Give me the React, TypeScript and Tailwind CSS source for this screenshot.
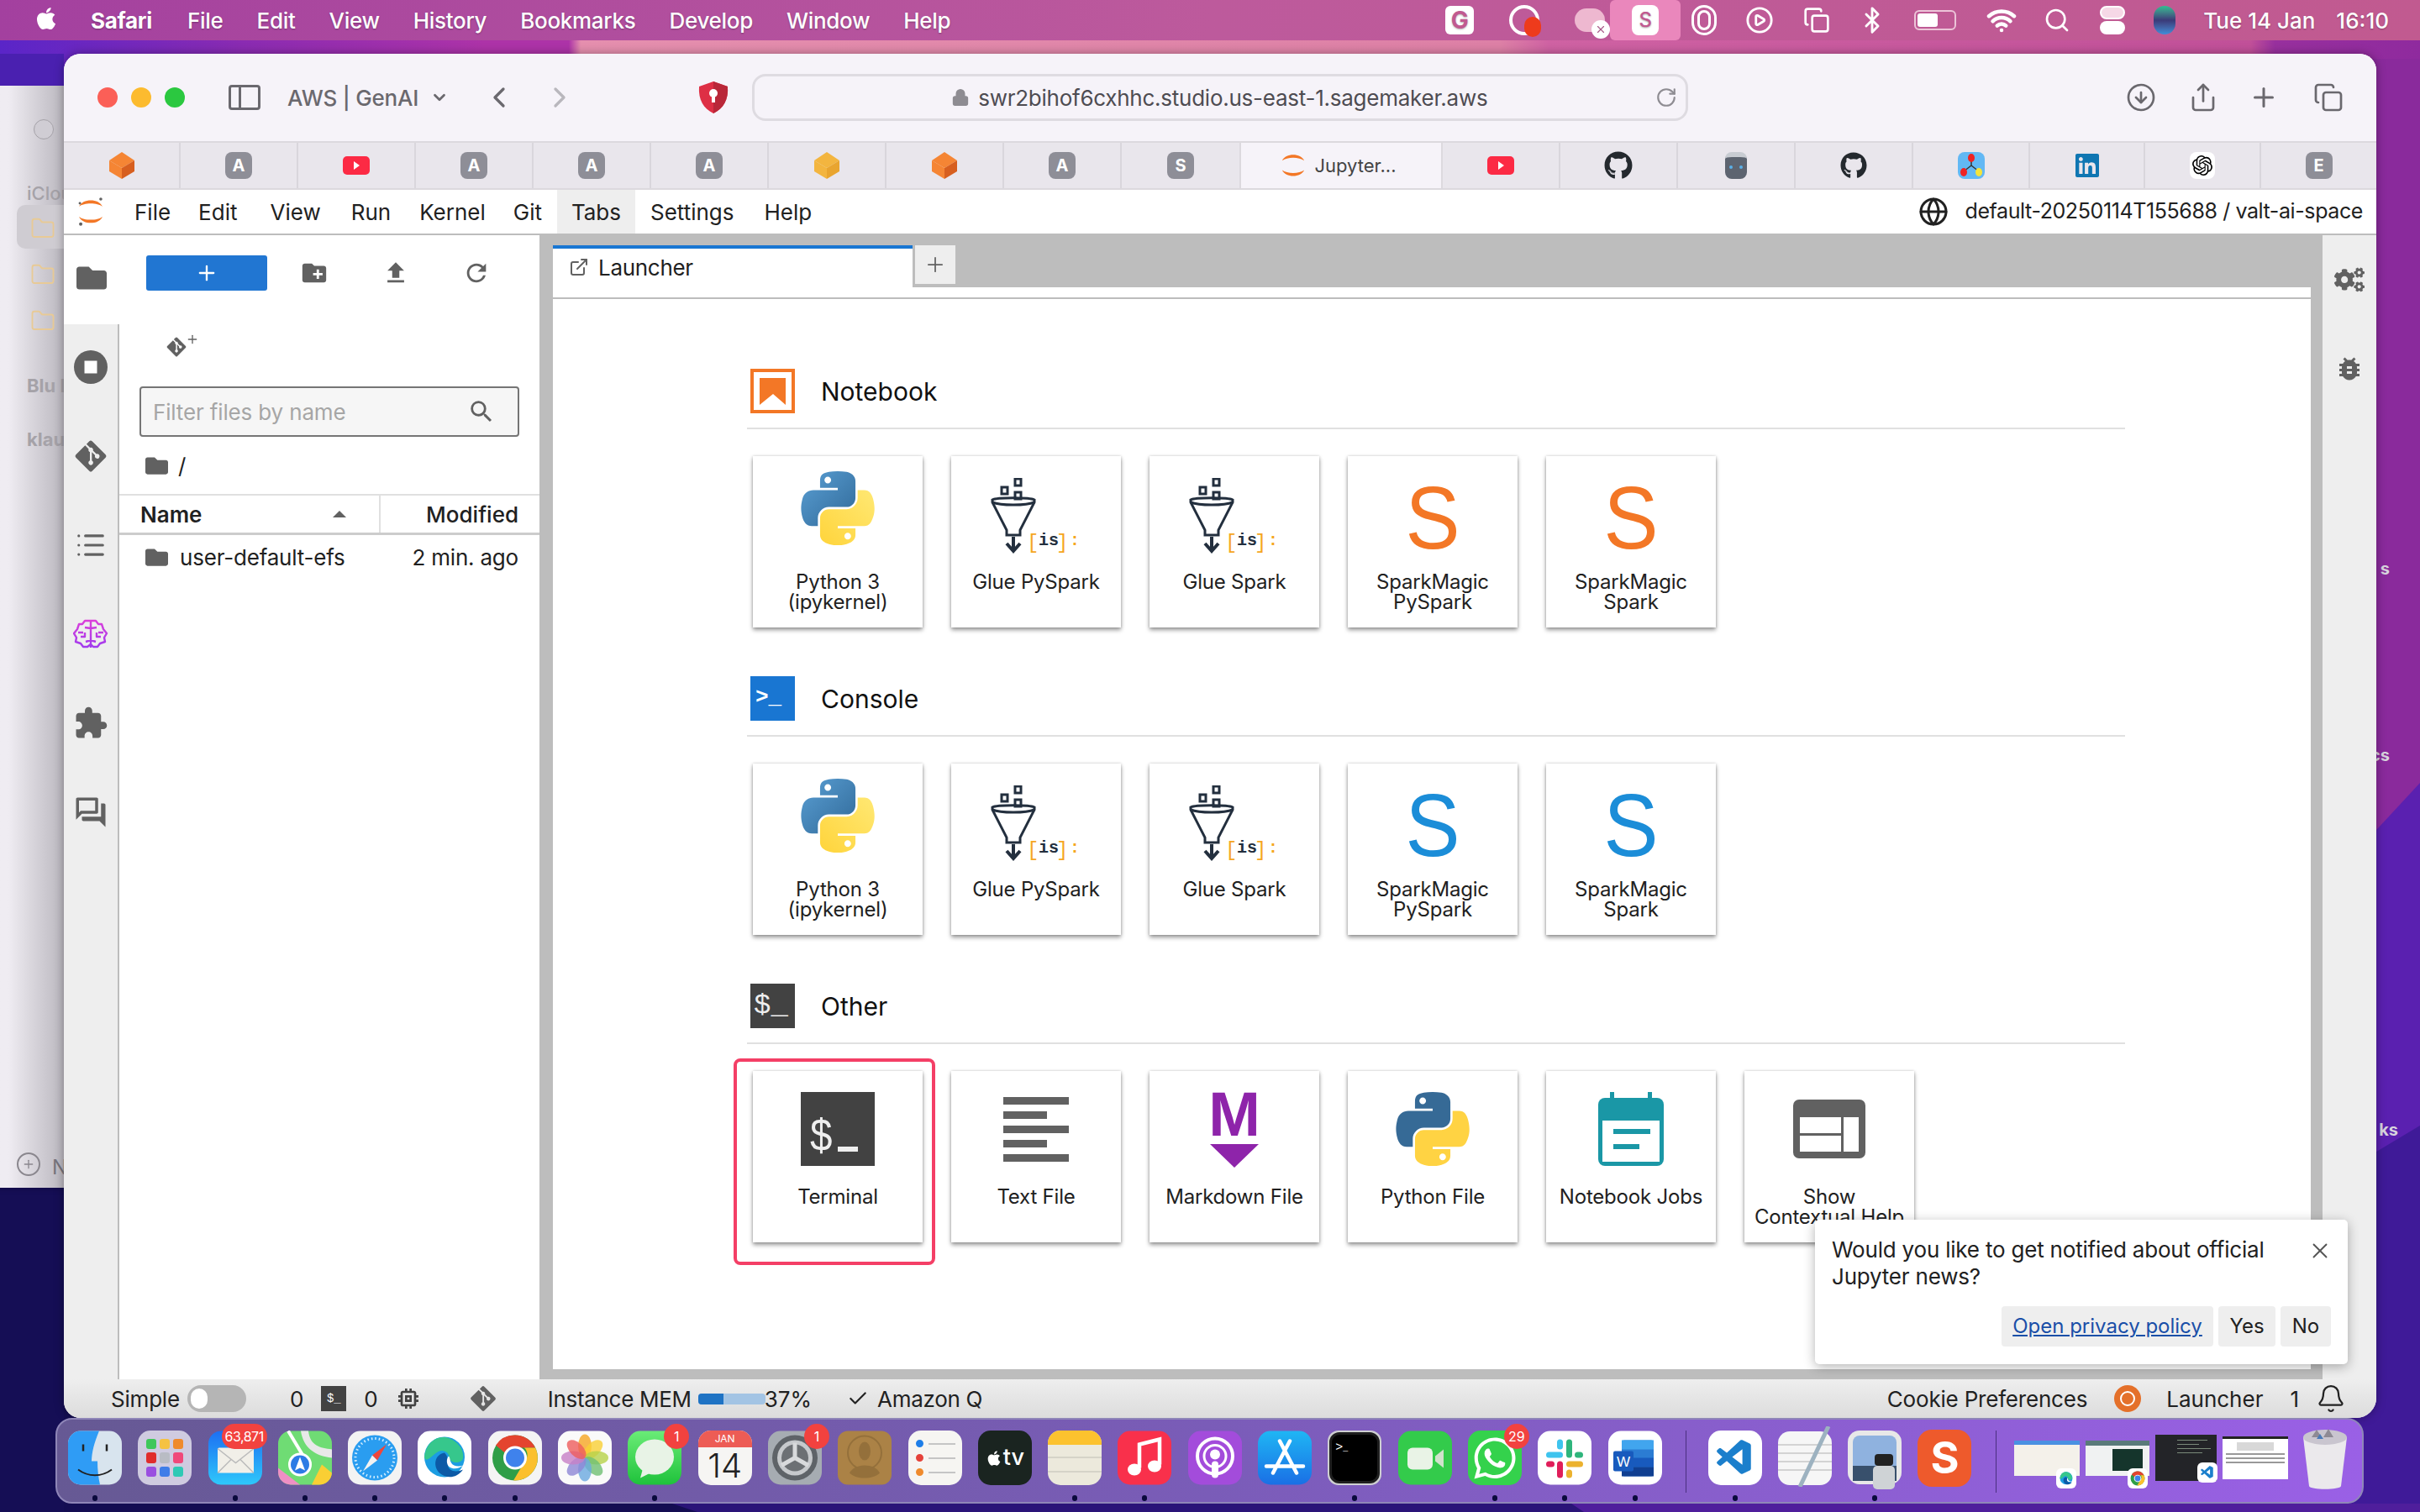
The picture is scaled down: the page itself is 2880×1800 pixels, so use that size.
import React from 'react';
import {
  ChevronLeft, ChevronRight, ChevronDown, CircleArrowDown, Share, Plus, Copy, RotateCw, Lock, Globe, Search, Wifi,
  Bluetooth, CirclePlay, Check, Bell, X, List, ExternalLink, Folder,
} from 'lucide-react';
import { FaApple, FaGithub, FaGitAlt, FaLinkedin, FaWhatsapp, FaCogs, FaFolder } from 'react-icons/fa';
import { MdCreateNewFolder, MdFileUpload, MdRefresh, MdSearch, MdExtension, MdOutlineForum, MdBugReport, MdMemory, MdStop } from 'react-icons/md';
import { SiOpenai } from 'react-icons/si';
import { VscVscode } from 'react-icons/vsc';

const SNAKE_TOP =
  'M54.918 0C50.335.02 45.957.41 42.106 1.093 30.76 3.098 28.7 7.295 28.7 15.032V25.25h26.812v3.406H18.638c-7.792 0-14.616 4.684-16.75 13.594-2.462 10.213-2.571 16.586 0 27.25 1.906 7.938 6.458 13.594 14.25 13.594h9.22V70.844c0-8.85 7.657-16.656 16.75-16.656h26.78c7.455 0 13.406-6.138 13.406-13.625V15.032c0-7.266-6.13-12.725-13.406-13.938C64.282.328 59.502-.02 54.918 0zM40.418 8.22c2.77 0 5.031 2.298 5.031 5.125 0 2.816-2.261 5.094-5.031 5.094-2.78 0-5.031-2.278-5.031-5.094 0-2.827 2.251-5.125 5.031-5.125z';
const SNAKE_BOTTOM =
  'M85.638 28.656v11.906c0 9.231-7.826 17-16.75 17H42.106c-7.336 0-13.406 6.278-13.406 13.625v25.531c0 7.266 6.319 11.54 13.406 13.625 8.487 2.496 16.626 2.947 26.78 0 6.75-1.954 13.406-5.888 13.406-13.625V86.5H55.512v-3.406h40.188c7.792 0 10.696-5.435 13.406-13.594 2.799-8.399 2.68-16.476 0-27.25-1.926-7.757-5.604-13.594-13.406-13.594zM70.575 93.313c2.78 0 5.031 2.278 5.031 5.094 0 2.827-2.251 5.125-5.031 5.125-2.77 0-5.031-2.298-5.031-5.125 0-2.816 2.261-5.094 5.031-5.094z';

const PythonLogo = ({ flat = false }: { flat?: boolean }) => (
  <svg viewBox="0 0 111 112" className={flat ? 'w-[88px] h-[88px]' : 'w-[88px] h-[88px] -mt-[15px]'}>
    <defs>
      <linearGradient id="pyBlue" x1="0" y1="0" x2="1" y2="1">
        <stop offset="0" stopColor="#5a9fd4" />
        <stop offset="1" stopColor="#306998" />
      </linearGradient>
      <linearGradient id="pyYellow" x1="0" y1="1" x2="1" y2="0">
        <stop offset="0" stopColor="#ffd43b" />
        <stop offset="1" stopColor="#ffe873" />
      </linearGradient>
    </defs>
    <path d={SNAKE_TOP} fill={flat ? '#366a96' : 'url(#pyBlue)'} fillRule="evenodd" />
    <path d={SNAKE_BOTTOM} fill={flat ? '#ffd343' : 'url(#pyYellow)'} fillRule="evenodd" />
  </svg>
);

const GlueIcon = () => (
  <svg viewBox="0 0 108 90" className="w-[108px] h-[90px] mt-[4px]" fill="none" stroke="#232f3e" strokeWidth="3">
    <rect x="29" y="1" width="7" height="8" />
    <rect x="13" y="11" width="7" height="8" />
    <rect x="29" y="17" width="7" height="8" />
    <path d="M2 26c6-3 44-3 50 0v3L35 62v6H19v-6L2 29z" />
    <path d="M2 29c10 4 40 4 50 0" />
    <path d="M27 70v15M19 78l8 9 8-9" strokeWidth="4" />
    <text x="43" y="84" fontSize="24" stroke="none" fill="#f5a623" fontFamily="'Liberation Mono', monospace">[</text>
    <text x="57" y="80" fontSize="20" stroke="none" fill="#232f3e" fontWeight="700" fontFamily="'Liberation Mono', monospace">is</text>
    <text x="78" y="84" fontSize="24" stroke="none" fill="#f5a623" fontFamily="'Liberation Mono', monospace">]</text>
    <text x="94" y="80" fontSize="20" stroke="none" fill="#f5a623" fontWeight="700" fontFamily="'Liberation Mono', monospace">:</text>
  </svg>
);

const SparkS = ({ color }: { color: string }) => (
  <svg viewBox="0 0 80 130" className="w-[80px] h-[130px] mt-[6px]">
    <g transform="translate(40 103) scale(0.92 1)">
      <text textAnchor="middle" fontSize="106" fill={color} fontFamily="'Liberation Sans', sans-serif">S</text>
    </g>
  </svg>
);

const TerminalIcon = () => (
  <svg viewBox="0 0 88 88" className="w-[88px] h-[88px]">
    <rect width="88" height="88" fill="#424242" />
    <g transform="translate(10 70) scale(0.85 1)">
      <text fontSize="56" fill="#eee" fontFamily="'Liberation Mono', monospace">$</text>
    </g>
    <rect x="44" y="65" width="24" height="6" fill="#eee" />
  </svg>
);

const TextFileIcon = () => (
  <div className="w-[78px] flex flex-col gap-[8px]">
    {[78, 52, 78, 52, 78].map((w, i) => (
      <div key={i} className={w === 78 ? 'h-[9px] w-[78px] bg-[#616161]' : 'h-[9px] w-[52px] bg-[#616161]'} />
    ))}
  </div>
);

const MarkdownIcon = () => (
  <svg viewBox="-10 -20 84 134" className="w-[84px] h-[134px]">
    <text x="32" y="55" textAnchor="middle" fontSize="74" fontWeight="700" fill="#8e24aa" fontFamily="'Liberation Sans', sans-serif">M</text>
    <polygon points="3,65 61,65 32,93" fill="#8e24aa" />
  </svg>
);

const JobsIcon = () => (
  <svg viewBox="0 0 78 88" className="w-[78px] h-[88px]">
    <rect x="14" y="0" width="5" height="10" fill="#1a97a6" />
    <rect x="59" y="0" width="5" height="10" fill="#1a97a6" />
    <rect x="0" y="7" width="78" height="81" rx="8" fill="#1a97a6" />
    <rect x="5" y="34" width="68" height="49" fill="#fff" />
    <rect x="18" y="44" width="44" height="6" fill="#1a97a6" />
    <rect x="18" y="62" width="31" height="6" fill="#1a97a6" />
  </svg>
);

const HelpIcon = () => (
  <svg viewBox="0 0 86 70" className="w-[86px] h-[70px]">
    <rect width="86" height="70" rx="7" fill="#616161" />
    <rect x="8" y="21" width="49" height="19" fill="#fff" />
    <rect x="8" y="43" width="49" height="19" fill="#fff" />
    <rect x="60" y="21" width="18" height="41" fill="#fff" />
  </svg>
);

const NotebookBadge = () => (
  <svg viewBox="0 0 53 53" className="w-[53px] h-[53px]">
    <rect width="53" height="53" fill="#f37726" />
    <rect x="4" y="4" width="45" height="45" fill="#fff" />
    <polygon points="11,11 42,11 42,43 27,30 11,43" fill="#f37726" />
  </svg>
);

const BrainIcon = () => (
  <svg viewBox="0 0 42 38" className="w-[42px] h-[38px]" fill="none" strokeWidth="2.4" strokeLinejoin="round">
    <defs>
      <linearGradient id="brainGrad" gradientUnits="userSpaceOnUse" x1="21" y1="0" x2="21" y2="38">
        <stop offset="0" stopColor="#e040d8" />
        <stop offset="1" stopColor="#9a3af0" />
      </linearGradient>
    </defs>
    <g stroke="url(#brainGrad)">
      <path d="M21 3h-7l-3 4H7l-2 6-4 5 3 5-1 5 6 2 3 4h5l4-3 3 3h5l3-4 6-2-1-5 3-5-4-5-2-6h-4l-3-4z" />
      <path d="M21 3v32M21 12l-7-1M21 12l7-1M12 17H6M14 17v5H9M30 17h6M28 17v5h5M21 26l-6 2M21 26l6 2" />
    </g>
  </svg>
);

const Card = ({ icon, lines, highlight = false }: { icon: React.ReactNode; lines: string[]; highlight?: boolean }) => (
  <div className="relative w-[202px] h-[204px] bg-white flex flex-col items-center shadow-[0_3px_5px_rgba(0,0,0,0.4),0_0_3px_rgba(0,0,0,0.18)] shrink-0">
    <div className="h-[138px] flex items-center justify-center shrink-0">{icon}</div>
    <div className="flex flex-col items-center text-[24px] leading-[24px] tracking-[-0.2px] text-[#212121] whitespace-nowrap">
      {lines.map(l => (
        <span key={l}>{l}</span>
      ))}
    </div>
    {highlight && <div className="absolute -left-[23px] -top-[15px] -right-[15px] -bottom-[27px] border-[4px] border-[#f43f66] rounded-[8px]" />}
  </div>
);

const Section = ({ icon, title, children }: { icon: React.ReactNode; title: string; children: React.ReactNode }) => (
  <div className="h-[366px]">
    <div className="h-[72px] border-b-2 border-[#e0e0e0] flex items-start w-[1640px]">
      <div className="w-[88px] pl-[4px] flex shrink-0">{icon}</div>
      <div className="text-[30px] leading-[54px] text-[#111]">{title}</div>
    </div>
    <div className="flex gap-[34px] pl-[7px] pt-[32px]">{children}</div>
  </div>
);

const BrowserTab = ({ children, w = 'w-[140px]' }: { children: React.ReactNode; w?: string }) => (
  <div className={`${w} h-full shrink-0 flex items-center justify-center border-r-2 border-[#d9d6dc]`}>{children}</div>
);

const Letter = ({ c }: { c: string }) => (
  <div className="w-[32px] h-[32px] rounded-[8px] bg-[#8e8e97] text-white text-[20px] font-bold flex items-center justify-center">{c}</div>
);
const Yt = () => (
  <div className="w-[32px] h-[22px] rounded-[5px] bg-[#fc2a44] flex items-center justify-center">
    <div className="w-0 h-0 border-y-[5px] border-y-transparent border-l-[7px] border-l-white" />
  </div>
);
const Cube = ({ c1, c2 }: { c1: string; c2: string }) => (
  <svg viewBox="0 0 30 32" className="w-[30px] h-[32px]">
    <polygon points="15,0 30,10 15,19 0,10" fill={c1} />
    <polygon points="0,10 15,19 15,32 0,23" fill={c1} />
    <polygon points="30,10 15,19 15,32 30,23" fill={c2} />
  </svg>
);
const JupyterArcs = ({ size = 32, dots = false }: { size?: number; dots?: boolean }) => (
  <svg viewBox="0 0 32 36" style={{ width: size, height: size * 1.12 }}>
    <path d="M2 12C6 2 26 2 30 12 24 7 8 7 2 12z" fill="#f37726" />
    <path d="M2 24C6 34 26 34 30 24 24 29 8 29 2 24z" fill="#f37726" />
    {dots && (
      <>
        <circle cx="28" cy="3" r="1.800" fill="#616161" />
        <circle cx="3" cy="8" r="1.500" fill="#616161" />
        <circle cx="4" cy="33" r="2" fill="#616161" />
      </>
    )}
  </svg>
);

const MENU = ['File', 'Edit', 'View', 'History', 'Bookmarks', 'Develop', 'Window', 'Help'];

const Finder = () => (
  <svg viewBox="0 0 64 64" className="w-full h-full">
    <rect width="64" height="64" rx="15" fill="#d8e4ee" />
    <path d="M15 0h22c-6 14-9 26-9 36h7c0 10 1 19 3 28H15A15 15 0 0 1 0 49V15A15 15 0 0 1 15 0z" fill="#2f9cf5" />
    <path d="M18 16v8M46 16v8" stroke="#222" strokeWidth="2.5" />
    <path d="M12 46c12 9 28 9 40 0" stroke="#222" strokeWidth="2" fill="none" />
  </svg>
);
const Launchpad = () => (
  <div className="w-full h-full rounded-[15px] bg-[#cfcbe0] grid grid-cols-3 gap-[4px] p-[10px]">
    {['#3fc75a', '#f5c242', '#ef8a2d', '#e02c2c', '#b9bcc4', '#f0487a', '#9a4fe0', '#3f7de8', '#2fc9b5'].map(c => (
      <div key={c} className="rounded-[3px]" style={{ background: c }} />
    ))}
  </div>
);
const MailIcon = () => (
  <svg viewBox="0 0 64 64" className="w-full h-full">
    <defs>
      <linearGradient id="mailBg" x1="0" y1="0" x2="0" y2="1">
        <stop offset="0" stopColor="#1d6ff2" />
        <stop offset="1" stopColor="#2ec8fb" />
      </linearGradient>
    </defs>
    <rect width="64" height="64" rx="15" fill="url(#mailBg)" />
    <rect x="11" y="20" width="43" height="30" rx="2" fill="#f1efe8" />
    <path d="M11 21l21.500 17L54 21M11 50l16-16M54 50L38 34" stroke="#bbb" strokeWidth="1.500" fill="none" />
  </svg>
);
const MapsIcon = () => (
  <svg viewBox="0 0 64 64" className="w-full h-full">
    <rect width="64" height="64" rx="15" fill="#6fdc74" />
    <path d="M0 44l26 20H15A15 15 0 0 1 0 49z" fill="#ef8fc4" />
    <path d="M40 64l12-24 12 10v0a15 15 0 0 1-15 14z" fill="#f9cf34" />
    <path d="M36 0c2 18 14 20 28 22v10C44 30 30 20 27 0z" fill="#e8e8e8" />
    <path d="M12 0L36 40" stroke="#fff" strokeWidth="4" />
    <circle cx="26" cy="40" r="14" fill="#fff" />
    <circle cx="26" cy="40" r="11" fill="#2c7be5" />
    <path d="M26 31l6 16-6-3-6 3z" fill="#fff" />
  </svg>
);
const SafariIcon = () => (
  <svg viewBox="0 0 64 64" className="w-full h-full">
    <rect width="64" height="64" rx="15" fill="#f3f3f3" />
    <circle cx="32" cy="32" r="27" fill="#2a9df0" />
    <circle cx="32" cy="32" r="23" fill="none" stroke="#d8f0ff" strokeWidth="3" strokeDasharray="1.500 3" />
    <polygon points="46,16 35,35 29,29" fill="#f0453a" />
    <polygon points="18,48 35,35 29,29" fill="#f2f2f2" />
  </svg>
);
const EdgeGlyph = () => (
  <>
    <circle cx="32" cy="31" r="24" fill="#1b9de2" />
    <path d="M8 31C10 12 26 4 38 9c10 4 18 14 16 24-2 6-14 6-16 0 0-8-8-12-14-8-8 5-14 14-16 6z" fill="#36c78c" />
    <path d="M32 26c-12 2-14 16-6 24 8 7 20 7 28-4-8 4-18 2-18-6 0-6 0-10-4-14z" fill="#0c5aa6" />
    <path d="M37 30c-3 3-3 10 1 13 4 3 12 2 16-2-5 2-12 1-14-3-2-3-1-6-3-8z" fill="#fff" />
  </>
);
const EdgeIcon = () => (
  <svg viewBox="0 0 64 64" className="w-full h-full">
    <rect width="64" height="64" rx="15" fill="#fff" />
    <EdgeGlyph />
  </svg>
);
const ChromeGlyph = () => (
  <>
    <circle cx="32" cy="32" r="27" fill="#2f9e48" />
    <path d="M32 5a27 27 0 0 1 24 15H32a12 12 0 0 0-11 7L9 17A27 27 0 0 1 32 5z" fill="#e4442f" />
    <path d="M56 20a27 27 0 0 1-26 39l13-22a12 12 0 0 0 0-17z" fill="#fbc02d" />
    <circle cx="32" cy="32" r="14" fill="#fff" />
    <circle cx="32" cy="32" r="11" fill="#3f82ec" />
  </>
);
const ChromeIcon = () => (
  <svg viewBox="0 0 64 64" className="w-full h-full">
    <rect width="64" height="64" rx="15" fill="#f4f4f4" />
    <ChromeGlyph />
  </svg>
);
const PhotosIcon = () => (
  <svg viewBox="0 0 64 64" className="w-full h-full">
    <rect width="64" height="64" rx="15" fill="#fafafa" />
    {['#f6a623', '#f9cf34', '#b6d24a', '#6fbf73', '#6aa9e0', '#8d87d6', '#c77fc7', '#ee5c5c'].map((c, i) => (
      <ellipse key={c} cx="32" cy="18" rx="8" ry="14" fill={c} opacity="0.8" transform={`rotate(${i * 45} 32 32)`} />
    ))}
  </svg>
);
const MessagesIcon = () => (
  <svg viewBox="0 0 64 64" className="w-full h-full">
    <defs>
      <linearGradient id="msgBg" x1="0" y1="0" x2="0" y2="1">
        <stop offset="0" stopColor="#6aec77" />
        <stop offset="1" stopColor="#1fc23b" />
      </linearGradient>
    </defs>
    <rect width="64" height="64" rx="15" fill="url(#msgBg)" />
    <ellipse cx="32" cy="31" rx="23" ry="21" fill="#e8f3e6" />
    <path d="M18 45l-3 11 14-7z" fill="#e8f3e6" />
  </svg>
);
const CalendarIcon = () => (
  <div className="w-full h-full rounded-[15px] bg-[#f6f5f3] overflow-hidden flex flex-col items-center">
    <div className="w-full h-[20px] bg-[#ed5c55] text-white text-[12px] leading-[20px] text-center">JAN</div>
    <div className="text-[40px] leading-[44px] text-[#222] font-light">14</div>
  </div>
);
const SettingsIcon = () => (
  <svg viewBox="0 0 64 64" className="w-full h-full">
    <rect width="64" height="64" rx="15" fill="#a6acb2" />
    <circle cx="32" cy="32" r="27" fill="#5e6368" />
    <circle cx="32" cy="32" r="21" fill="#c6c9cc" />
    <circle cx="32" cy="32" r="16" fill="#6c7074" />
    <path d="M32 32V14M32 32l16 9M32 32l-16 9" stroke="#d8dadc" strokeWidth="5" />
  </svg>
);
const ContactsIcon = () => (
  <svg viewBox="0 0 64 64" className="w-full h-full">
    <rect width="64" height="64" rx="12" fill="#ab8246" />
    <circle cx="32" cy="26" r="20" fill="none" stroke="#94703b" strokeWidth="2" />
    <ellipse cx="32" cy="24" rx="7" ry="11" fill="#94703b" />
    <path d="M14 50c6-12 30-12 36 0-8 8-28 8-36 0z" fill="#94703b" />
  </svg>
);
const RemindersIcon = () => (
  <div className="w-full h-full rounded-[15px] bg-[#f6f5f2] flex flex-col justify-center gap-[8px] pl-[9px]">
    {['#1e7ee8', '#e5423a', '#ef8a2d'].map(c => (
      <div key={c} className="flex items-center gap-[6px]">
        <div className="w-[9px] h-[9px] rounded-full border-2" style={{ borderColor: c, background: c }} />
        <div className="w-[32px] h-[2px] bg-[#c5c5c5]" />
      </div>
    ))}
  </div>
);
const TvIcon = () => (
  <div className="w-full h-full rounded-[15px] bg-[#1a2420] flex items-center justify-center gap-[1px] text-white text-[27px] font-medium">
    <FaApple size={20} />
    <span>tv</span>
  </div>
);
const NotesIcon = () => (
  <div className="w-full h-full rounded-[15px] bg-[#ece9dc] overflow-hidden flex flex-col">
    <div className="h-[17px] bg-[#fcc22e] shrink-0" />
    <div className="h-[2px] mt-[14px] bg-[#d5d3c8]" />
    <div className="h-[2px] mt-[15px] bg-[#d5d3c8]" />
  </div>
);
const MusicIcon = () => (
  <svg viewBox="0 0 64 64" className="w-full h-full">
    <rect width="64" height="64" rx="15" fill="#f9304b" />
    <path d="M26 44V16l24-6v30" stroke="#fff" strokeWidth="4.500" fill="none" />
    <ellipse cx="20" cy="46" rx="8" ry="7" fill="#fff" />
    <ellipse cx="44" cy="42" rx="8" ry="7" fill="#fff" />
  </svg>
);
const PodcastIcon = () => (
  <svg viewBox="0 0 64 64" className="w-full h-full">
    <rect width="64" height="64" rx="15" fill="#a34cdb" />
    <circle cx="32" cy="30" r="21" fill="none" stroke="#fff" strokeWidth="4" />
    <circle cx="32" cy="30" r="13" fill="none" stroke="#fff" strokeWidth="3" />
    <circle cx="32" cy="28" r="6" fill="#fff" />
    <rect x="28" y="36" width="8" height="20" rx="4" fill="#fff" />
  </svg>
);
const AppStoreIcon = () => (
  <svg viewBox="0 0 64 64" className="w-full h-full">
    <defs>
      <linearGradient id="asBg" x1="0" y1="0" x2="0" y2="1">
        <stop offset="0" stopColor="#1fb6f4" />
        <stop offset="1" stopColor="#1a6fe5" />
      </linearGradient>
    </defs>
    <rect width="64" height="64" rx="15" fill="url(#asBg)" />
    <path d="M26 12l20 38M38 12L18 50M10 42h44" stroke="#fff" strokeWidth="4.500" strokeLinecap="round" />
  </svg>
);
const TerminalApp = () => (
  <div className="w-full h-full rounded-[13px] bg-[#cfd0d2] p-[2px]">
    <div className="w-full h-full rounded-[12px] bg-black border-[3px] border-[#1f1f1f] text-white text-[15px] leading-[20px] pl-[4px] pt-[6px] font-mono">
      {'>'}
      <span className="text-[10px]">_</span>
    </div>
  </div>
);
const FaceTimeIcon = () => (
  <svg viewBox="0 0 64 64" className="w-full h-full">
    <rect width="64" height="64" rx="15" fill="#33cb4b" />
    <rect x="11" y="20" width="30" height="26" rx="6" fill="#e9f3e6" />
    <polygon points="44,30 54,22 54,44 44,36" fill="#d0e2cc" />
  </svg>
);
const WhatsappIcon = () => (
  <div className="w-full h-full rounded-[15px] bg-[#34d24c] flex items-center justify-center text-white">
    <FaWhatsapp size={56} />
  </div>
);
const SlackIcon = () => (
  <svg viewBox="0 0 64 64" className="w-full h-full">
    <rect width="64" height="64" rx="15" fill="#fff" />
    <rect x="10" y="25" width="20" height="7" rx="3.500" fill="#3ec4ee" />
    <rect x="23" y="10" width="7" height="12" rx="3.500" fill="#3ec4ee" />
    <rect x="34" y="10" width="7" height="22" rx="3.500" fill="#2fb57c" />
    <rect x="44" y="25" width="10" height="7" rx="3.500" fill="#2fb57c" />
    <rect x="34" y="36" width="20" height="7" rx="3.500" fill="#ecb22e" />
    <rect x="34" y="46" width="7" height="10" rx="3.500" fill="#ecb22e" />
    <rect x="23" y="36" width="7" height="20" rx="3.500" fill="#e01e5a" />
    <rect x="10" y="36" width="10" height="7" rx="3.500" fill="#e01e5a" />
  </svg>
);
const WordIcon = () => (
  <svg viewBox="0 0 64 64" className="w-full h-full">
    <rect width="64" height="64" rx="15" fill="#fff" />
    <rect x="16" y="11" width="38" height="43" rx="3" fill="#2b7cd3" />
    <rect x="16" y="11" width="38" height="11" fill="#41a5ee" />
    <rect x="16" y="32" width="38" height="11" fill="#185abd" />
    <rect x="16" y="43" width="38" height="11" fill="#103f91" />
    <rect x="6" y="24" width="24" height="24" rx="2" fill="#185abd" />
    <text x="18" y="42" textAnchor="middle" fontSize="17" fill="#fff" fontFamily="'Liberation Sans', sans-serif">W</text>
  </svg>
);
const CodeIcon = () => (
  <div className="w-full h-full rounded-[15px] bg-white flex items-center justify-center text-[#1b7fcc]">
    <VscVscode size={50} />
  </div>
);
const TextEditIcon = () => (
  <svg viewBox="0 0 64 72" className="w-full h-[72px] -mt-[5px]">
    <rect y="6" width="64" height="64" rx="14" fill="#f6f6f6" />
    <path d="M0 22h64M0 32h64M0 42h64M0 52h64" stroke="#c8c8c8" strokeWidth="1.500" />
    <path d="M60 0L26 72" stroke="#9db2c0" strokeWidth="5" />
  </svg>
);
const PreviewIcon = () => (
  <svg viewBox="0 0 64 72" className="w-full h-[72px]">
    <rect width="64" height="64" rx="14" fill="#e8e8e8" />
    <rect x="6" y="6" width="52" height="54" rx="8" fill="#8fb2df" />
    <rect x="6" y="42" width="52" height="18" fill="#38506c" />
    <rect x="32" y="28" width="22" height="14" rx="4" fill="#222" />
    <rect x="30" y="42" width="26" height="28" rx="5" fill="#cfd3d6" />
  </svg>
);
const SublimeIcon = () => (
  <div className="w-full h-[68px] -mt-[1px] rounded-[17px] bg-[#ee5a2c] flex items-center justify-center text-white text-[52px] font-bold">S</div>
);

type DockApp = { key: string; node: React.ReactNode; dot?: boolean; badge?: string };
const APPS: DockApp[] = [
  { key: 'finder', node: <Finder />, dot: true },
  { key: 'launchpad', node: <Launchpad /> },
  { key: 'mail', node: <MailIcon />, dot: true, badge: '63,871' },
  { key: 'maps', node: <MapsIcon />, dot: true },
  { key: 'safari', node: <SafariIcon />, dot: true },
  { key: 'edge', node: <EdgeIcon />, dot: true },
  { key: 'chrome', node: <ChromeIcon />, dot: true },
  { key: 'photos', node: <PhotosIcon /> },
  { key: 'messages', node: <MessagesIcon />, dot: true, badge: '1' },
  { key: 'calendar', node: <CalendarIcon /> },
  { key: 'settings', node: <SettingsIcon />, badge: '1' },
  { key: 'contacts', node: <ContactsIcon /> },
  { key: 'reminders', node: <RemindersIcon /> },
  { key: 'tv', node: <TvIcon /> },
  { key: 'notes', node: <NotesIcon />, dot: true },
  { key: 'music', node: <MusicIcon />, dot: true },
  { key: 'podcasts', node: <PodcastIcon /> },
  { key: 'appstore', node: <AppStoreIcon /> },
  { key: 'terminal', node: <TerminalApp />, dot: true },
  { key: 'facetime', node: <FaceTimeIcon /> },
  { key: 'whatsapp', node: <WhatsappIcon />, dot: true, badge: '29' },
  { key: 'slack', node: <SlackIcon />, dot: true },
  { key: 'word', node: <WordIcon />, dot: true },
];
const APPS2: DockApp[] = [
  { key: 'code', node: <CodeIcon />, dot: true },
  { key: 'textedit', node: <TextEditIcon /> },
  { key: 'preview', node: <PreviewIcon />, dot: true },
  { key: 'sublime', node: <SublimeIcon /> },
];

const DockItem = ({ app }: { app: DockApp }) => (
  <div className="relative w-[64px] shrink-0">
    <div className="h-[65px]">{app.node}</div>
    {app.dot && <div className="absolute left-[29px] top-[77px] w-[6px] h-[7px] rounded-full bg-[#0a0a3c]" />}
    {app.badge && (
      <div
        className={
          app.badge.length > 2
            ? 'absolute -top-[8px] left-[16px] w-[54px] h-[30px] rounded-full bg-[#f2423f] text-white text-[16px] leading-[30px] text-center tracking-[-0.5px]'
            : 'absolute -top-[8px] left-[43px] w-[30px] h-[30px] rounded-full bg-[#f2423f] text-white text-[16px] leading-[30px] text-center'
        }
      >
        {app.badge}
      </div>
    )}
  </div>
);

const MiniBadge = ({ children }: { children: React.ReactNode }) => (
  <div className="absolute left-[50px] top-[33px] w-[24px] h-[24px] rounded-[6px] bg-white flex items-center justify-center">{children}</div>
);

export default function App() {
  return (
    <div className="relative w-[2880px] h-[1800px] overflow-hidden bg-[#140d52] [font-family:Inter,'Liberation_Sans',sans-serif]">
      {/* wallpaper */}
      <svg viewBox="0 0 2880 1800" className="absolute inset-0 w-full h-full">
        <defs>
          <linearGradient id="wallTop" x1="0" y1="0" x2="1" y2="0">
            <stop offset="0" stopColor="#5a25c8" />
            <stop offset="0.1" stopColor="#8a2bb2" />
            <stop offset="0.2" stopColor="#ad33a8" />
            <stop offset="0.235" stopColor="#ad33a8" />
            <stop offset="0.24" stopColor="#e58fae" />
            <stop offset="0.62" stopColor="#dd80a6" />
            <stop offset="0.64" stopColor="#cf62a3" />
            <stop offset="0.93" stopColor="#c15099" />
            <stop offset="0.94" stopColor="#98309e" />
            <stop offset="1" stopColor="#8f2a9e" />
          </linearGradient>
        </defs>
        <rect width="2880" height="1000" fill="url(#wallTop)" />
        <polygon points="2780,70 2880,70 2880,1000 2780,1000" fill="#8a2a9c" />
        <polygon points="2780,1040 2880,932 2880,1360 2780,1400" fill="#5a20b0" />
        <polygon points="2780,1400 2880,1340 2880,1800 2780,1800" fill="#3f1a98" />
        <rect y="1000" width="2780" height="800" fill="#140d52" />
        <polygon points="0,64 76,64 76,1412 0,1412" fill="#4a20b0" />
        <polygon points="0,1412 76,1412 76,1800 0,1800" fill="#150e55" />
        <polygon points="800,1790 2880,1790 2880,1800 830,1800" fill="#2a1478" />
        <polygon points="1870,1790 2880,1790 2880,1800 1885,1800" fill="#4f1e9c" />
      </svg>
      <div className="absolute right-[36px] top-[662px] text-[20px] font-bold text-[#d8d4de]">s</div>
      <div className="absolute right-[36px] top-[884px] text-[20px] font-bold text-[#d8d4de]">cs</div>
      <div className="absolute right-[26px] top-[1330px] text-[20px] font-bold text-[#d8d4de]">ks</div>

      {/* window behind */}
      <div className="absolute -left-[100px] top-[102px] w-[200px] h-[1312px] rounded-[20px] bg-gradient-to-r from-[#efecf2] from-55% to-[#a8a5ad] shadow-md overflow-hidden">
        <div className="absolute left-[140px] top-[40px] w-[24px] h-[24px] rounded-full bg-[#d0cdd4] border border-[#a5a2a8]" />
        <div className="absolute left-[132px] top-[112px] text-[22px] text-[#a5a2a8] font-medium">iCloud</div>
        <div className="absolute left-[120px] top-[142px] w-[70px] h-[52px] rounded-[10px] bg-[#cfccd2]" />
        {[155, 210, 265].map(t => (
          <Folder key={t} className="absolute left-[136px] text-[#e8ca96]" size={30} strokeWidth={1.5} style={{ top: t }} />
        ))}
        <div className="absolute left-[132px] top-[341px] text-[22px] text-[#a5a2a8] font-bold">Blu I</div>
        <div className="absolute left-[132px] top-[405px] text-[22px] text-[#a5a2a8] font-bold">klau</div>
        <div className="absolute left-[120px] top-[1270px] w-[28px] h-[28px] rounded-full border-2 border-[#8a878e] flex items-center justify-center text-[#8a878e]">
          <Plus size={16} />
        </div>
        <div className="absolute left-[162px] top-[1270px] text-[24px] text-[#77747c]">N</div>
      </div>

      {/* mac menubar */}
      <div className="relative h-[48px] flex items-center pl-[40px] bg-gradient-to-r from-[#a3409f] via-[#bd5a9c] to-[#c15a90] text-white text-[26px] font-medium [text-shadow:0_1px_2px_rgba(0,0,0,0.3)]">
        <FaApple size={30} className="mr-[38px] -mt-[4px]" />
        <span className="font-bold mr-[42px] tracking-[-0.3px]">Safari</span>
        <div className="flex gap-[40px] tracking-[-0.3px]">
          {MENU.map(m => (
            <span key={m}>{m}</span>
          ))}
        </div>
        <div className="ml-auto flex items-center h-full pr-[37px]">
          <div className="w-[34px] h-[34px] rounded-[6px] bg-white text-[#c15a90] font-bold flex items-center justify-center text-[28px] mr-[42px]">G</div>
          <div className="relative w-[36px] h-[36px] rounded-full border-[4px] border-white mr-[42px]">
            <div className="absolute right-[-6px] bottom-[-6px] w-[20px] h-[24px] rounded-full bg-[#ee3b1c]" />
          </div>
          <div className="relative w-[36px] h-[28px] rounded-full bg-[#eeb8d0] mr-[2px]">
            <div className="absolute right-[-6px] bottom-[-8px] w-[22px] h-[22px] rounded-full bg-white text-[#a85a88] flex items-center justify-center">
              <X size={14} />
            </div>
          </div>
          <div className="w-[84px] h-full rounded-[6px] bg-[#ea87bc] flex items-center justify-center ml-[4px]">
            <div className="w-[32px] h-[36px] rounded-[8px] bg-white text-[#c15a90] text-[24px] flex items-center justify-center">S</div>
          </div>
          <div className="w-[56px] flex justify-center">
            <div className="w-[30px] h-[36px] rounded-full border-[3px] border-white flex items-center justify-center">
              <div className="w-[16px] h-[24px] rounded-full border-[3px] border-white" />
            </div>
          </div>
          <div className="w-[76px] flex justify-center"><CirclePlay size={34} /></div>
          <div className="w-[60px] flex justify-center"><Copy size={32} /></div>
          <div className="w-[72px] flex justify-center"><Bluetooth size={34} /></div>
          <div className="w-[78px] flex justify-center">
            <div className="w-[50px] h-[24px] rounded-[6px] border-2 border-[#ecc4d8] p-[2px]">
              <div className="w-[24px] h-full rounded-[3px] bg-white" />
            </div>
          </div>
          <div className="w-[80px] flex justify-center"><Wifi size={36} strokeWidth={3} /></div>
          <div className="w-[52px] flex justify-center"><Search size={32} /></div>
          <div className="w-[80px] flex justify-center">
            <div className="w-[30px] h-[34px] flex flex-col gap-[2px]">
              <div className="h-[16px] rounded-full bg-[#f6d8e6] border-2 border-white" />
              <div className="h-[16px] rounded-full bg-white" />
            </div>
          </div>
          <div className="w-[44px] flex justify-center">
            <div className="w-[26px] h-[34px] rounded-full bg-gradient-to-b from-[#2fbf8f] via-[#3a3a78] to-[#3f8fd8]" />
          </div>
          <span className="ml-[24px]">Tue 14 Jan</span>
          <span className="ml-[25px]">16:10</span>
        </div>
      </div>

      {/* safari window */}
      <div className="absolute left-[76px] top-[64px] w-[2752px] h-[1624px] rounded-[20px] rounded-br-[24px] overflow-hidden flex flex-col bg-white shadow-[0_0_12px_rgba(0,0,0,0.35)]">
        <div className="h-[104px] bg-[#f6f3f9] flex items-center shrink-0 text-[#6a686e]">
          <div className="flex gap-[16px] pl-[40px]">
            <div className="w-[24px] h-[24px] rounded-full bg-[#fb5f57]" />
            <div className="w-[24px] h-[24px] rounded-full bg-[#fcbb2f]" />
            <div className="w-[24px] h-[24px] rounded-full bg-[#2bc840]" />
          </div>
          <div className="ml-[52px] w-[38px] h-[30px] rounded-[4px] border-[3px] border-[#6a686e] flex">
            <div className="w-[12px] border-r-[3px] border-[#6a686e]" />
          </div>
          <span className="ml-[32px] text-[26px] font-medium tracking-[-0.2px] whitespace-nowrap">AWS | GenAI</span>
          <ChevronDown size={22} strokeWidth={3} className="ml-[14px]" />
          <ChevronLeft size={40} strokeWidth={2} className="ml-[40px]" />
          <ChevronRight size={40} strokeWidth={2} className="ml-[32px] text-[#b9b7bd]" />
          <svg viewBox="0 0 40 40" className="ml-[143px] w-[40px] h-[40px] shrink-0">
            <path d="M20 1l17 6c1 16-5 26-17 32C8 33 2 23 3 7z" fill="#de2f45" />
            <path d="M20 1l17 6c1 16-5 26-17 32z" fill="#b92739" />
            <circle cx="20" cy="15" r="5" fill="#fff" />
            <rect x="18" y="15" width="4" height="11" fill="#fff" />
          </svg>
          <div className="ml-[26px] w-[1114px] h-[56px] rounded-[16px] border-[3px] border-[#dedbe1] flex items-center shrink-0 text-[26px]">
            <Lock size={22} fill="#8e8c92" className="ml-[234px] text-[#8e8c92]" />
            <span className="ml-[10px] text-[#4e4c52] whitespace-nowrap tracking-[-0.25px]">swr2bihof6cxhhc.studio.us-east-1.sagemaker.aws</span>
            <RotateCw size={26} className="ml-auto mr-[10px] text-[#8e8c92]" />
          </div>
          <CircleArrowDown size={36} strokeWidth={1.8} className="ml-[521px]" />
          <Share size={36} strokeWidth={1.8} className="ml-[38px]" />
          <Plus size={36} strokeWidth={2} className="ml-[36px]" />
          <Copy size={36} strokeWidth={1.8} className="ml-[41px]" />
        </div>
        <div className="h-[58px] bg-[#e9e6ec] border-t-2 border-b-2 border-[#dcd9de] flex items-stretch shrink-0">
          <BrowserTab w="w-[139px]"><Cube c1="#f58534" c2="#d75f1f" /></BrowserTab>
          <BrowserTab><Letter c="A" /></BrowserTab>
          <BrowserTab><Yt /></BrowserTab>
          <BrowserTab><Letter c="A" /></BrowserTab>
          <BrowserTab><Letter c="A" /></BrowserTab>
          <BrowserTab><Letter c="A" /></BrowserTab>
          <BrowserTab><Cube c1="#f3b53f" c2="#e9a52f" /></BrowserTab>
          <BrowserTab><Cube c1="#f58534" c2="#d75f1f" /></BrowserTab>
          <BrowserTab><Letter c="A" /></BrowserTab>
          <div className="w-[140px] h-full shrink-0 flex items-center justify-center"><Letter c="S" /></div>
          <div className="w-[242px] h-full shrink-0 bg-[#f6f3f9] border-x-2 border-[#dcd9de] flex items-center justify-center gap-[10px] pr-[6px] text-[22px] text-[#444]">
            <JupyterArcs size={30} />
            <span>Jupyter...</span>
          </div>
          <BrowserTab><Yt /></BrowserTab>
          <BrowserTab><FaGithub size={34} className="text-[#24292e]" /></BrowserTab>
          <BrowserTab>
            <div className="relative w-[26px] h-[32px] rounded-[8px] bg-[#5d6470] border-t-[6px] border-[#c8ccd2]">
              <div className="absolute left-[5px] top-[10px] w-[4px] h-[4px] rounded-full bg-[#5ab0e8]" />
              <div className="absolute right-[5px] top-[10px] w-[4px] h-[4px] rounded-full bg-[#5ab0e8]" />
            </div>
          </BrowserTab>
          <BrowserTab><FaGithub size={32} className="text-[#24292e]" /></BrowserTab>
          <BrowserTab w="w-[139px]">
            <svg viewBox="0 0 32 32" className="w-[32px] h-[32px]">
              <rect width="32" height="32" rx="8" fill="#62b8f4" />
              <path d="M16 8v8M16 16L7 23M16 16l9 7" stroke="#333" strokeWidth="1.500" />
              <ellipse cx="16" cy="7" rx="4" ry="5" fill="#ee2222" />
              <ellipse cx="7" cy="24" rx="4" ry="5" fill="#ee2222" />
              <ellipse cx="25" cy="24" rx="4" ry="5" fill="#f4e43a" />
            </svg>
          </BrowserTab>
          <BrowserTab w="w-[137px]"><FaLinkedin size={32} className="text-[#0f76b2]" /></BrowserTab>
          <BrowserTab w="w-[138px]">
            <div className="w-[30px] h-[32px] rounded-[8px] bg-white flex items-center justify-center">
              <SiOpenai size={24} className="text-black" />
            </div>
          </BrowserTab>
          <div className="w-[137px] h-full shrink-0 flex items-center justify-center"><Letter c="E" /></div>
        </div>

        {/* jupyter menu */}
        <div className="h-[52px] flex items-stretch shrink-0 text-[26px] text-[#212121]">
          <div className="w-[84px] flex items-center pl-[16px]">
            <JupyterArcs size={32} dots />
          </div>
          <div className="flex items-center">
            <span>File</span>
            <span className="ml-[33px]">Edit</span>
            <span className="ml-[39px]">View</span>
            <span className="ml-[36px]">Run</span>
            <span className="ml-[34px]">Kernel</span>
            <span className="ml-[33px]">Git</span>
            <div className="ml-[18px] h-full w-[93px] bg-[#eeeeee] flex items-center justify-center">Tabs</div>
            <span className="ml-[18px]">Settings</span>
            <span className="ml-[36px]">Help</span>
          </div>
          <div className="ml-auto flex items-center pr-[16px]">
            <Globe size={36} className="text-[#212121] mr-[20px]" />
            <span className="text-[25px] whitespace-nowrap tracking-[-0.4px]">default-20250114T155688 / valt-ai-space</span>
          </div>
        </div>

        {/* jupyter body */}
        <div className="flex-1 min-h-0 flex border-t-2 border-[#bdbdbd] bg-[#bdbdbd]">
          <div className="w-[66px] shrink-0 bg-[#eeeeee] border-r-2 border-[#bdbdbd] flex flex-col items-center text-[#616161]">
            <div className="w-[66px] -mr-[2px] h-[106px] bg-white flex items-center justify-center pb-[4px] text-[#616161]">
              <FaFolder size={36} />
            </div>
            <div className="h-[106px] flex items-center justify-center -mt-[2px]">
              <div className="w-[40px] h-[40px] rounded-full bg-[#616161] flex items-center justify-center text-white">
                <MdStop size={30} />
              </div>
            </div>
            <div className="h-[106px] flex items-center justify-center"><FaGitAlt size={42} /></div>
            <div className="h-[106px] flex items-center justify-center"><List size={38} /></div>
            <div className="h-[106px] flex items-center justify-center"><BrainIcon /></div>
            <div className="h-[106px] flex items-center justify-center"><MdExtension size={42} /></div>
            <div className="h-[106px] flex items-center justify-center"><MdOutlineForum size={42} /></div>
          </div>
          <div className="w-[500px] shrink-0 bg-white flex flex-col text-[#212121]">
            <div className="h-[100px] flex items-start pt-[24px] pl-[32px] text-[#616161]">
              <div className="w-[144px] h-[42px] rounded-[3px] bg-[#2176d2] flex items-center justify-center text-white"><Plus size={28} /></div>
              <MdCreateNewFolder size={34} className="ml-[39px] mt-[4px]" />
              <MdFileUpload size={34} className="ml-[63px] mt-[4px]" />
              <MdRefresh size={34} className="ml-[62px] mt-[4px]" />
            </div>
            <div className="h-[74px] pl-[55px] pt-[20px] flex items-start text-[#616161]">
              <FaGitAlt size={26} />
              <Plus size={16} className="-mt-[4px] -ml-[2px]" />
            </div>
            <div className="mx-[24px] mt-[6px] h-[60px] rounded-[4px] border-[2px] border-[#757575] bg-[#f6f6f6] flex items-center pl-[14px] pr-[26px] text-[26px] text-[#a6a6a6] tracking-[-0.15px]">
              <span>Filter files by name</span>
              <MdSearch size={34} className="ml-auto text-[#616161]" />
            </div>
            <div className="h-[68px] pl-[31px] flex items-center gap-[12px] text-[26px]">
              <FaFolder size={27} className="text-[#616161]" />
              <span>/</span>
            </div>
            <div className="h-[49px] border-t-2 border-b-[3px] border-[#e0e0e0] border-b-[#cccccc] flex items-center text-[26px]">
              <span className="ml-[25px] font-semibold">Name</span>
              <div className="ml-[156px] w-0 h-0 border-x-[8px] border-x-transparent border-b-[8px] border-b-[#616161]" />
              <div className="ml-[39px] w-[2px] h-full bg-[#e0e0e0]" />
              <span className="ml-auto mr-[25px] font-medium">Modified</span>
            </div>
            <div className="h-[52px] flex items-center text-[26px] pl-[31px] pr-[25px] tracking-[-0.2px]">
              <FaFolder size={27} className="text-[#616161]" />
              <span className="ml-[14px]">user-default-efs</span>
              <span className="ml-auto">2 min. ago</span>
            </div>
          </div>

          <div className="flex-1 min-w-0 flex flex-col pl-[16px] pr-[14px] pb-[12px] pt-[12px]">
            <div className="h-[50px] flex shrink-0">
              <div className="w-[428px] bg-white border-t-[4px] border-[#1976d2] flex items-center pl-[19px] text-[26px] text-[#212121] tracking-[-0.3px] pb-[2px]">
                <ExternalLink size={24} className="text-[#616161] mr-[11px]" />
                Launcher
              </div>
              <div className="ml-[1px] w-[50px] h-[48px] bg-[#eeeeee] border-l-2 border-b-2 border-[#bdbdbd] flex items-center justify-center text-[#616161]">
                <Plus size={28} strokeWidth={1.5} />
              </div>
            </div>
            <div className="h-[14px] bg-white border-b-2 border-[#bdbdbd] shrink-0" />
            <div className="flex-1 bg-white relative pl-[231px] pt-[83px] min-h-0">
              <Section icon={<NotebookBadge />} title="Notebook">
                <Card icon={<PythonLogo />} lines={['Python 3', '(ipykernel)']} />
                <Card icon={<GlueIcon />} lines={['Glue PySpark']} />
                <Card icon={<GlueIcon />} lines={['Glue Spark']} />
                <Card icon={<SparkS color="#f37726" />} lines={['SparkMagic', 'PySpark']} />
                <Card icon={<SparkS color="#f37726" />} lines={['SparkMagic', 'Spark']} />
              </Section>
              <Section icon={<div className="w-[53px] h-[53px] bg-[#1976d2] text-white text-[26px] font-bold [font-family:'Liberation_Mono',monospace] pl-[6px] leading-[50px]">{'>_'}</div>} title="Console">
                <Card icon={<PythonLogo />} lines={['Python 3', '(ipykernel)']} />
                <Card icon={<GlueIcon />} lines={['Glue PySpark']} />
                <Card icon={<GlueIcon />} lines={['Glue Spark']} />
                <Card icon={<SparkS color="#1b8dd8" />} lines={['SparkMagic', 'PySpark']} />
                <Card icon={<SparkS color="#1b8dd8" />} lines={['SparkMagic', 'Spark']} />
              </Section>
              <Section icon={<div className="w-[53px] h-[53px] bg-[#424242] text-[#eee] text-[34px] [font-family:'Liberation_Mono',monospace] pl-[4px] leading-[52px]">{'$_'}</div>} title="Other">
                <Card icon={<TerminalIcon />} lines={['Terminal']} highlight />
                <Card icon={<TextFileIcon />} lines={['Text File']} />
                <Card icon={<MarkdownIcon />} lines={['Markdown File']} />
                <Card icon={<PythonLogo flat />} lines={['Python File']} />
                <Card icon={<JobsIcon />} lines={['Notebook Jobs']} />
                <Card icon={<HelpIcon />} lines={['Show', 'Contextual Help']} />
              </Section>
            </div>
          </div>

          <div className="w-[64px] shrink-0 bg-[#eeeeee] flex flex-col items-center text-[#616161]">
            <div className="h-[106px] flex items-center justify-center"><FaCogs size={36} /></div>
            <div className="h-[106px] flex items-center justify-center"><MdBugReport size={36} /></div>
          </div>
        </div>

        {/* status bar */}
        <div className="h-[46px] shrink-0 bg-gradient-to-b from-[#eeeeee] to-[#dcdcdc] flex items-center text-[26px] text-[#212121] whitespace-nowrap">
          <span className="ml-[56px] tracking-[-0.2px]">Simple</span>
          <div className="ml-[9px] w-[70px] h-[32px] rounded-full bg-[#b5b5b5] flex items-center pl-[4px]">
            <div className="w-[20px] h-[24px] rounded-full bg-white" />
          </div>
          <span className="ml-[52px]">0</span>
          <div className="ml-[21px] w-[30px] h-[30px] bg-[#424242] text-white text-[14px] leading-[30px] text-center [font-family:'Liberation_Mono',monospace]">$_</div>
          <span className="ml-[21px]">0</span>
          <MdMemory size={32} className="ml-[20px] text-[#424242]" />
          <FaGitAlt size={34} className="ml-[56px] text-[#616161]" />
          <span className="ml-[60px] tracking-[-0.3px]">Instance MEM</span>
          <div className="ml-[8px] w-[80px] h-[13px] rounded-[4px] bg-[#a3c4e4] overflow-hidden">
            <div className="w-[30px] h-full bg-[#1f73c4]" />
          </div>
          <span className="-ml-[1px]">37%</span>
          <Check size={26} className="ml-[42px]" />
          <span className="ml-[10px] tracking-[-0.3px]">Amazon Q</span>
          <span className="ml-auto tracking-[-0.2px]">Cookie Preferences</span>
          <div className="ml-[32px] w-[32px] h-[32px] rounded-full bg-[#e4702a] flex items-center justify-center">
            <div className="w-[18px] h-[18px] rounded-full border-2 border-white" />
          </div>
          <span className="ml-[30px]">Launcher</span>
          <span className="ml-[32px]">1</span>
          <Bell size={36} strokeWidth={1.5} className="ml-[20px] mr-[36px]" />
        </div>

        {/* notification */}
        <div className="absolute left-[2084px] top-[1388px] w-[634px] h-[172px] bg-white rounded-[5px] shadow-[0_3px_14px_rgba(0,0,0,0.3)] pl-[20px] pr-[20px] pt-[20px] text-[26px] leading-[32px] text-[#212121]">
          <div className="flex">
            <div className="tracking-[-0.2px]">Would you like to get notified about official<br />Jupyter news?</div>
            <X size={30} strokeWidth={1.5} className="ml-auto mt-[2px] -mr-[2px] text-[#555]" />
          </div>
          <div className="mt-[19px] flex justify-end gap-[6px] text-[24px]">
            <div className="h-[48px] w-[252px] rounded-[4px] bg-[#eeeeee] flex items-center justify-center text-[#1a4fa8] underline">Open privacy policy</div>
            <div className="h-[48px] w-[68px] rounded-[4px] bg-[#eeeeee] flex items-center justify-center">Yes</div>
            <div className="h-[48px] w-[60px] rounded-[4px] bg-[#eeeeee] flex items-center justify-center">No</div>
          </div>
        </div>
      </div>

      {/* dock */}
      <div className="absolute left-[66px] top-[1688px] w-[2747px] h-[102px] rounded-[20px] border-2 border-[#8f86b8] bg-gradient-to-r from-[#665994] via-[#7a5cb8] via-50% to-[#9a60e6] flex items-start pl-[13px] pt-[13px]">
        <div className="flex gap-[19.3px]">
          {APPS.map(a => (
            <DockItem key={a.key} app={a} />
          ))}
        </div>
        <div className="ml-[28px] w-[1px] h-[74px] bg-[#4a2f80]" />
        <div className="ml-[26px] flex gap-[19.3px]">
          {APPS2.map(a => (
            <DockItem key={a.key} app={a} />
          ))}
        </div>
        <div className="ml-[29px] w-[1px] h-[74px] bg-[#4a2f80]" />
        <div className="ml-[21px] flex items-start gap-[7px]">
          <div className="relative w-[78px] h-[42px] mt-[12px] bg-[#f4f1ea] shrink-0">
            <div className="h-[5px] bg-[#4a90e2]" />
            <MiniBadge>
              <svg viewBox="0 0 64 64" className="w-[20px] h-[20px]"><EdgeGlyph /></svg>
            </MiniBadge>
          </div>
          <div className="relative w-[76px] h-[42px] mt-[12px] bg-[#f0f2f2] shrink-0">
            <div className="h-[6px] bg-[#5a7a7a]" />
            <div className="ml-[32px] mt-[4px] w-[36px] h-[26px] bg-[#15352c]" />
            <MiniBadge>
              <svg viewBox="0 0 64 64" className="w-[20px] h-[20px]"><ChromeGlyph /></svg>
            </MiniBadge>
          </div>
          <div className="relative w-[73px] h-[55px] mt-[5px] bg-[#232428] shrink-0">
            <div className="ml-[26px] pt-[6px] flex flex-col gap-[4px]">
              <div className="w-[36px] h-[1px] bg-[#7a8a7a]" />
              <div className="w-[26px] h-[1px] bg-[#7a8a7a]" />
              <div className="w-[40px] h-[1px] bg-[#7a8a7a]" />
              <div className="w-[30px] h-[1px] bg-[#7a8a7a]" />
            </div>
            <MiniBadge>
              <VscVscode size={18} className="text-[#1b7fcc]" />
            </MiniBadge>
          </div>
          <div className="w-[78px] h-[51px] mt-[7px] bg-white border-t-[3px] border-[#222] shrink-0 flex flex-col items-center gap-[3px] pt-[4px]">
            <div className="w-[44px] h-[10px] bg-[#d8d8d8]" />
            <div className="w-[70px] h-[2px] bg-[#999]" />
            <div className="w-[70px] h-[2px] bg-[#999]" />
            <div className="w-[70px] h-[2px] bg-[#999]" />
          </div>
          <svg viewBox="0 0 56 76" className="w-[56px] h-[76px] ml-[9px] -mt-[4px] shrink-0">
            <path d="M2 12L9 70c1 5 37 5 38 0l7-58z" fill="#ebe9ec" />
            <ellipse cx="28" cy="12" rx="26" ry="9" fill="#c9c5cf" />
            <path d="M12 12l6-9 6 9M26 12l6-10 6 10" fill="#8e8a94" />
            <path d="M18 14l4-6 4 6" fill="#4a7ab8" />
          </svg>
        </div>
      </div>
    </div>
  );
}
